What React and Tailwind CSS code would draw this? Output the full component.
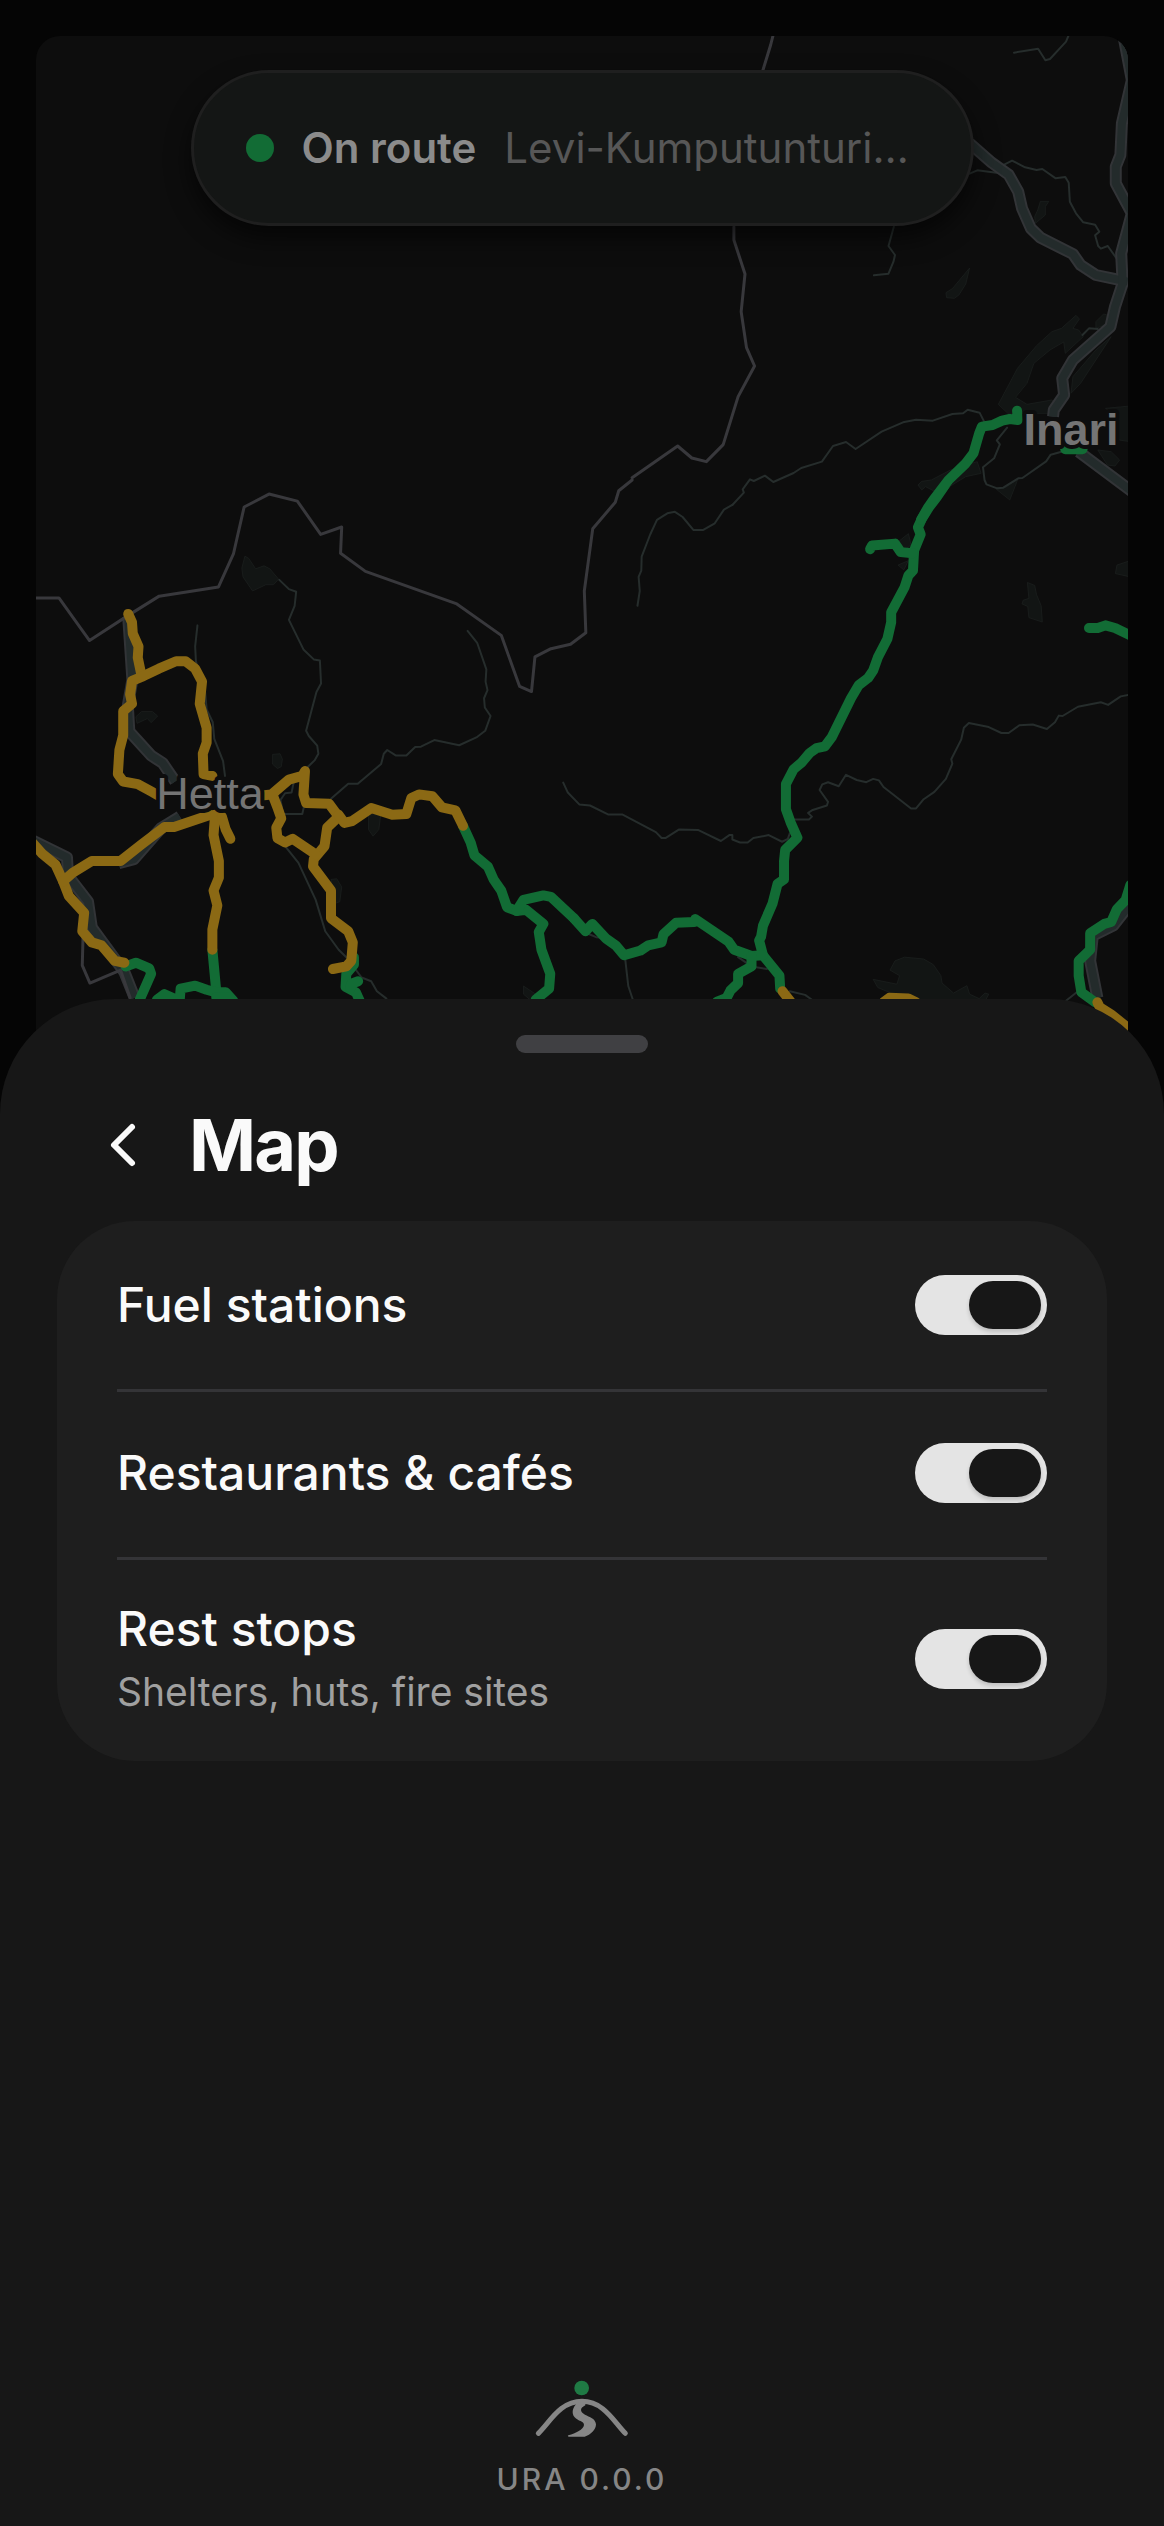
import React, { useState } from "react";
import { ChevronLeft } from "lucide-react";

// Map geometry, split into tiles. Every layer is a list of path strings.
const tiles = [
  {
    id: "west",
    transform: "translate(0 480) scale(.38265 .3699)",
    lakes: [
      "M640 206L650 212 668 240 690 232 705 240 728 268 715 283 695 283 660 300 635 262 632 238Z",
      "M355 640L370 626 398 626 412 638 395 656 385 645 358 658Z",
      "M712 742L732 740 738 755 735 775 725 780 712 768Z",
      "M963 905L995 905 990 945 975 963 963 945Z",
      "M865 1080L880 1078 893 1100 888 1140 875 1145Z",
      "M1368 1368L1400 1390 1385 1405 1368 1390Z",
    ],
    minor: [
      "M516 393L510 450 512 490 520 520",
      "M535 560L540 620 556 655 560 700 583 760 588 800",
      "M730 270L755 295 774 302 770 340 755 378 793 458 820 485 836 488 839 550 827 573 800 678 807 692 829 718 832 740 822 758 800 780",
      "M1222 408L1247 440 1271 512 1269 545 1274 568 1265 590 1267 615 1282 638 1268 678 1245 696 1200 717 1135 703 1100 721 1085 722 1062 745 1035 745 1012 730 1003 740 996 768 935 821 910 821 865 862",
      "M768 815L762 845 745 847 733 865 740 903 790 903 795 880",
      "M745 990L780 1035 825 1135 850 1220 885 1270 905 1290 945 1345 970 1355 985 1382 1010 1402",
    ],
    roads: [
      "M335 370L346 540 334 610 338 680 395 745 425 765 458 815",
      "M60 962L175 1020 178 1070 230 1140 240 1210 325 1330 352 1400",
      "M470 910L420 942 350 1025 310 1036",
    ],
    borders: [
      "M1652 0L1617 29 1608 60 1549 132 1527 300 1531 413 1491 444 1440 456 1398 478 1389 572 1358 558 1310 420 1192 334 955 247 890 198 893 127 838 147 777 57 703 38 638 73 610 200 571 289 416 314 332 368 234 434 154 319 94 319",
      "M217 1235L215 1312 235 1360 315 1325 340 1400",
    ],
    green: [
      "M1210 935L1230 980 1240 1015 1275 1045 1290 1080 1310 1110 1325 1155 1350 1165 1375 1162 1420 1200 1408 1222 1415 1270 1438 1335 1435 1375 1400 1405",
      "M1350 1165L1368 1135 1420 1123 1440 1127 1500 1185",
      "M555 1270L565 1380",
      "M328 1315L355 1305 390 1320 395 1335 365 1405",
      "M410 1405L430 1390 455 1402 470 1402 472 1375 510 1367 540 1378 565 1385 590 1385 610 1408",
      "M565 1398L600 1400",
      "M925 1290L925 1310 905 1335 903 1370 930 1385 940 1408",
      "M936 1355L918 1362 915 1375",
    ],
    amber: [
      "M335 362L345 385 347 415 362 450 360 480 370 530",
      "M555 800L532 795 530 740 540 710 540 670 522 605 528 545 510 510 485 490 460 490 415 510 375 530 345 543 340 580 345 605 322 625 322 690 312 730 308 795 322 815 360 822 395 842 412 852",
      "M80 975L110 1010 145 1040 165 1085 180 1125 220 1170 215 1220 240 1250 265 1258 300 1300 325 1305",
      "M165 1085L190 1062 240 1030 315 1030 370 985 430 938 455 938 550 905",
      "M562 905L558 960 572 1030 572 1075 558 1110 568 1150 555 1215 555 1270",
      "M580 910L590 945 602 970",
      "M690 852L710 850 755 810 790 800 797 787 793 850 800 873 860 875 885 910 855 940 848 990 820 1025 818 1045 865 1110 865 1185 910 1220 922 1250 918 1300 905 1315 870 1322",
      "M885 905L900 927 920 922 970 887 1025 905 1062 903 1075 860 1095 850 1130 855 1155 885 1190 893 1210 935",
      "M712 850L725 885 735 915 722 940 725 968 745 980 765 970 825 1012",
    ],
  },
  {
    id: "east",
    transform: "translate(564 480) scale(.38265 .3699)",
    lakes: [
      "M1211 277L1230 285 1235 310 1247 340 1250 384 1215 372 1212 342 1197 335 1200 325 1215 320Z",
      "M1445 230L1480 218 1480 262 1441 253Z",
      "M852 1325L865 1300 890 1290 940 1295 965 1310 985 1340 988 1360 1018 1387 1053 1367 1060 1390 1085 1402 1100 1387 1110 1390 1100 1410 840 1410 850 1385 820 1372 808 1350 870 1363 877 1340Z",
      "M870 170L900 145 907 175 890 190Z",
      "M873 230L900 218 888 243Z",
    ],
    minor: [
      "M440 67L418 80 394 117 364 135 338 135 310 100 290 86 270 90 243 108 225 148 203 207 202 245 195 262 198 300 192 340",
      "M600 918L640 918 648 910 638 900 650 892 687 880 690 870 668 838 675 823 690 817 718 828 737 797 765 811 790 817 808 808 823 812 835 830 907 888 920 888 940 863 968 843 998 808 1015 767 1012 755 1038 702 1045 670 1058 657 1110 668 1143 684 1162 684 1190 663 1225 661 1262 673 1283 655 1293 637 1303 638 1343 613 1403 601 1422 608 1455 585 1480 580",
      "M-2 818L10 845 40 877 68 880 115 904 152 904 240 952 255 968 265 968 300 945 350 946 410 976 432 960 440 960 440 972 460 980 480 980 495 968 535 960 570 978 585 970 590 955",
      "M160 1295L168 1368 180 1405",
      "M590 1382L630 1392 648 1405",
      "M455 1290L490 1315 530 1322",
      "M66 1228L84 1236 105 1238",
      "M1340 1385L1312 1408",
    ],
    roads: ["M1484 1140L1436 1204 1382 1232 1375 1300 1394 1400"],
    borders: [],
    green: [
      "M1008 -5L975 45 955 72 935 105 925 128 932 147 915 190 912 245 900 258 890 290 855 358 855 385 845 430 820 480 808 515 795 535 770 555 750 590 700 695 682 720 660 725 642 738 620 765 600 782 580 822 580 890 592 925 610 967 578 1000 575 1030 575 1080 558 1092 545 1145 520 1205 515 1235 510 1245 520 1285 563 1340 565 1375",
      "M800 187L805 177 865 172 880 195 912 198",
      "M1372 400L1395 400 1415 393 1440 400 1490 425",
      "M26 1185L56 1220 74 1200 110 1240 135 1258 157 1285 200 1272 220 1258 255 1250 260 1228 293 1197 340 1195 343 1187 430 1248 445 1270 490 1287 520 1285",
      "M490 1287L490 1315 455 1335 455 1360 435 1380 425 1400 400 1410",
      "M1480 1095L1468 1135 1445 1160 1430 1195 1412 1200 1375 1225 1375 1270 1345 1300 1345 1340 1352 1385 1388 1412",
    ],
    amber: ["M571 1382L592 1410", "M835 1412L850 1400 900 1402 920 1412", "M1394 1412L1400 1425 1430 1445 1485 1490"],
  },
  {
    id: "north-east",
    transform: "translate(564 0) scale(.38265 .33333)",
    lakes: [
      "M1245 604L1267 604 1258 620 1258 645 1232 670 1230 650 1238 630Z",
      "M1060 804L1050 852 1032 885 1020 895 1000 893 998 878 1015 866Z",
      "M1338 946L1347 957 1330 985 1345 990 1357 1010 1310 1060 1306 1026 1270 1050 1228 1090 1210 1150 1180 1192 1210 1213 1275 1200 1290 1215 1265 1240 1190 1240 1160 1240 1135 1213 1185 1105 1235 1037 1275 995 1300 985Z",
      "M1390 965L1410 942 1420 945 1415 975 1390 985Z",
      "M1430 1010L1350 1150 1325 1180 1330 1130 1390 1050Z",
      "M1080 1385L1090 1420 1050 1430 1000 1465 970 1475 945 1460 935 1470 925 1455 935 1444 960 1440 1010 1410Z",
      "M1187 1435L1165 1500 1130 1468 1155 1462Z",
      "M1395 1350L1430 1355 1452 1380 1440 1398 1420 1395Z",
      "M1415 1225L1480 1218 1480 1325 1450 1320 1435 1240Z",
    ],
    minor: [
      "M1176 158L1239 146 1258 181 1270 177 1312 125 1318 108",
      "M1060 521L1080 511 1140 520",
      "M1140 500L1171 482 1205 502 1235 510 1250 507 1285 535 1310 531 1319 548 1322 605 1338 640 1357 667 1388 674 1399 695 1388 706 1396 738 1403 746 1421 738 1444 775",
      "M862 680L848 738 865 765 861 785 848 821 810 826",
      "M1098 1265L1086 1238 1055 1229 1043 1240 1015 1242 964 1262 920 1259 886 1267 830 1295 762 1347 737 1326 703 1338 674 1385 620 1404 600 1419 547 1446 525 1427 496 1443 486 1438 467 1468 470 1478 440 1515",
      "M1158 1283L1131 1321 1139 1333 1124 1375 1095 1402 1099 1440 1104 1453 1132 1465 1148 1463 1187 1435 1198 1434 1260 1384 1272 1364 1300 1355",
      "M1355 1005L1372 985 1395 987",
    ],
    roads: [
      "M1060 430L1118 488 1162 524 1187 575 1197 625 1220 685 1245 713 1330 762 1350 795 1390 825 1473 845",
      "M1462 108L1484 240 1458 370 1454 465 1442 500 1442 550 1470 610 1484 640 1456 760 1460 850 1440 920 1428 980 1330 1080 1302 1135 1307 1185 1280 1230 1278 1250",
      "M1345 1355L1484 1474",
    ],
    borders: [
      "M546 108L540 135 520 210",
      "M444 680L444 720 473 822 463 935 477 1043 498 1098 455 1190 416 1334 372 1385 334 1374 297 1338 178 1433",
    ],
    green: [
      "M1184 1232L1186 1260 1165 1257 1145 1262 1120 1275 1092 1280 1085 1300 1075 1340 1070 1360 1050 1390 1005 1440 985 1470 965 1500 950 1525 933 1560",
      "M1310 1348L1355 1348",
    ],
    amber: [],
  },
];

const places = [
  { name: "Hetta", x: 210, y: 809, weight: 400, size: 45 },
  { name: "Inari", x: 1071, y: 445, weight: 700, size: 45 },
];

function Lines({ paths, stroke, width, cap = "round" }) {
  return (
    <g fill="none" stroke={stroke} strokeWidth={width} strokeLinecap={cap} strokeLinejoin="round">
      {paths.map((d) => (
        <path key={d} d={d} vectorEffect="non-scaling-stroke" />
      ))}
    </g>
  );
}

function RouteMap() {
  return (
    <svg
      viewBox="36 36 1092 1083"
      preserveAspectRatio="xMidYMin slice"
      className="block h-full w-full"
      role="img"
      aria-label="Route map"
    >
      {tiles.map((t) => (
        <g key={t.id} transform={t.transform}>
          <g fill="#121514" stroke="#1c201f" strokeWidth="2">
            {t.lakes.map((d) => (
              <path key={d} d={d} />
            ))}
          </g>
          <Lines paths={t.minor} stroke="#262d2c" width="2" />
          <Lines paths={t.roads} stroke="#323437" width="12" cap="butt" />
          <Lines paths={t.roads} stroke="#232b2b" width="8" cap="butt" />
          <Lines paths={t.borders} stroke="#38383c" width="3" />
          <Lines paths={t.green} stroke="#126c35" width="10" />
          <Lines paths={t.amber} stroke="#8b6914" width="10" />
        </g>
      ))}
      {places.map((p) => (
        <text
          key={p.name}
          x={p.x}
          y={p.y}
          fontSize={p.size}
          fontWeight={p.weight}
          textAnchor="middle"
          fill="#747474"
          stroke="#0d0d0d"
          strokeWidth="8"
          strokeLinejoin="round"
          paintOrder="stroke"
          className="font-['Liberation_Sans',Arial,sans-serif]"
        >
          {p.name}
        </text>
      ))}
    </svg>
  );
}

function UraLogo() {
  return (
    <svg viewBox="192 88 288 180" className="h-[60px] w-24" aria-hidden="true">
      <circle cx="335" cy="115" r="22" fill="#1f7a44" />
      <path
        d="M205 251C240 217 270 155 336 155C402 155 432 217 466 251"
        fill="none"
        stroke="#868686"
        strokeWidth="15"
        strokeLinecap="round"
      />
      <path
        d="M322 160C308 172 303 190 314 203C324 215 342 214 342 226C340 240 318 250 295 257Q291 260 296 261L344 261C362 256 378 240 378 224C377 206 358 202 345 195C330 187 328 176 346 167L346 158Z"
        fill="#868686"
      />
    </svg>
  );
}

const layers = [
  { id: "fuel", label: "Fuel stations" },
  { id: "food", label: "Restaurants & cafés" },
  { id: "rest", label: "Rest stops", hint: "Shelters, huts, fire sites" },
];

function LayerRow({ layer, checked, onChange, divider }) {
  return (
    <li
      className={`flex min-h-[168px] items-center justify-between gap-6 py-[39px] ${
        divider ? "shadow-[inset_0_3px_0_#343437]" : ""
      }`}
    >
      <label htmlFor={layer.id} className="text-[48px] leading-[66px] font-medium text-neutral-50">
        {layer.label}
        {layer.hint && (
          <span className="block text-[39px] leading-[60px] font-normal text-[#a0a0a0]">{layer.hint}</span>
        )}
      </label>
      <input
        id={layer.id}
        type="checkbox"
        role="switch"
        checked={checked}
        onChange={onChange}
        className="flex h-[60px] w-[132px] shrink-0 cursor-pointer appearance-none rounded-full bg-neutral-700 p-1.5 before:h-12 before:w-18 before:rounded-full before:bg-neutral-900 before:shadow-[0_3px_4px_rgba(0,0,0,0.16)] before:transition-transform checked:bg-[#e4e4e4] checked:before:translate-x-12"
      />
    </li>
  );
}

export default function App() {
  const [enabled, setEnabled] = useState({ fuel: true, food: true, rest: true });

  const toggle = (id) => {
    setEnabled((prev) => ({ ...prev, [id]: !prev[id] }));
  };

  return (
    <main className="flex min-h-screen flex-col bg-[#050505] font-['Inter',sans-serif]">
      <section className="relative h-[1119px] px-9 pt-9">
        <div className="h-full overflow-hidden rounded-t-3xl bg-[#0d0d0d]">
          <RouteMap />
        </div>

        {/* Status pill floats over the map */}
        <div className="absolute inset-x-9 top-[70px] flex justify-center">
          <div className="flex h-[156px] w-[783px] max-w-full items-center rounded-full border-3 border-[#1f1f1f] bg-[#141615] px-[52px] text-[42px] leading-[60px] shadow-[0_12px_24px_rgba(0,0,0,0.6)]">
            <span className="size-7 shrink-0 rounded-full bg-[#126c35]" />
            <span className="ml-7 shrink-0 font-semibold text-[#8b8b8b]">On route</span>
            <span className="ml-7 truncate text-[#575757]">Levi-Kumputunturi…</span>
          </div>
        </div>
      </section>

      <section className="relative -mt-[120px] flex flex-1 flex-col rounded-t-[115px] bg-neutral-900 px-[57px] pt-9">
        <div className="h-[18px] w-[132px] self-center rounded-full bg-[#404043]" />

        <header className="mt-5 mb-1 flex h-36 items-center">
          <button type="button" aria-label="Back" className="flex h-[132px] w-[132px] items-center justify-center text-neutral-50">
            <ChevronLeft size={72} strokeWidth={2} />
          </button>
          <h1 className="text-[72px] leading-[90px] font-bold tracking-tight text-neutral-50">Map</h1>
        </header>

        <ul className="rounded-[78px] bg-[#1e1e1e] px-[60px]">
          {layers.map((layer, index) => (
            <LayerRow
              key={layer.id}
              layer={layer}
              divider={index > 0}
              checked={enabled[layer.id]}
              onChange={() => toggle(layer.id)}
            />
          ))}
        </ul>

        <footer className="mt-auto flex flex-col items-center pb-6">
          <UraLogo />
          <p className="mt-[18px] text-[30px] leading-[45px] font-medium tracking-widest text-[#868686]">URA 0.0.0</p>
        </footer>
      </section>
    </main>
  );
}
